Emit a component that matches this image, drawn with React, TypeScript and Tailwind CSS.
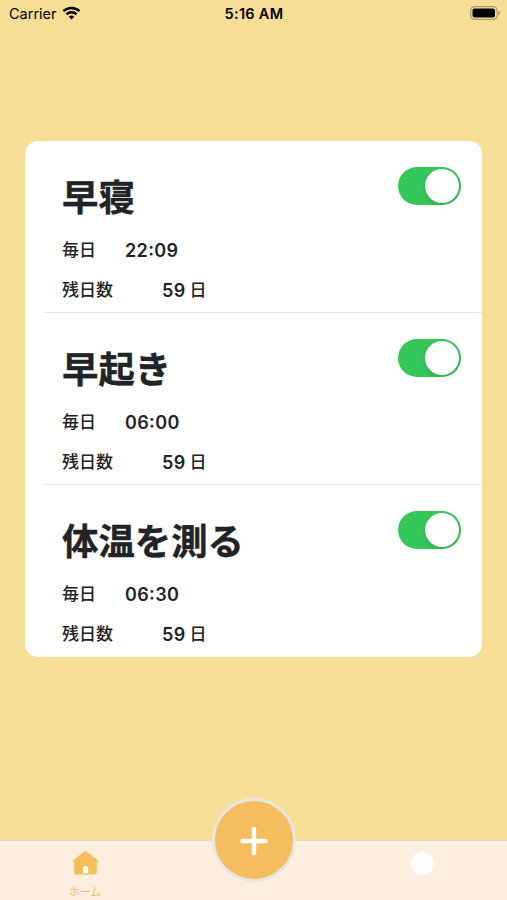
const alarms = [
  { title: '早寝', time: '22:09', daysLeft: 59 },
  { title: '早起き', time: '06:00', daysLeft: 59 },
  { title: '体温を測る', time: '06:30', daysLeft: 59 },
]

function StatusBar() {
  return (
    <header className="grid h-7 grid-cols-3 items-center pl-[9px] pr-[6px] text-black">
      <div className="flex items-center gap-[5px]">
        <span className="text-[14.5px] leading-7">Carrier</span>
        <svg className="-mt-[2px]" width="19" height="14" viewBox="0 0 18 14" fill="none" stroke="currentColor" strokeWidth="2.5">
          <path d="M1 5.2C5.4 .9 12.6 .9 17 5.2" />
          <path d="M4 8.3c2.8-2.7 7.2-2.7 10 0" />
          <path d="M6.3 10.7c1.5-1.5 3.9-1.5 5.4 0L9 13.6z" fill="currentColor" stroke="none" />
        </svg>
      </div>
      <span className="pr-[2px] text-center text-[14.5px] font-semibold leading-7 tracking-[0.02em]">5:16 AM</span>
      <svg className="-mt-[2px] justify-self-end" width="31" height="14" viewBox="0 0 31 14">
        <rect x=".6" y=".6" width="26.6" height="12.8" rx="4" fill="none" stroke="#ab9b70" strokeWidth="1.2" />
        <rect x="2.5" y="2.5" width="22.5" height="9" rx="2" />
        <path d="M28.5 4.7c2 .8 2 3.8 0 4.6z" fill="#ab9b70" />
      </svg>
    </header>
  )
}

function Toggle() {
  return (
    <button role="switch" aria-checked className="mt-[26px] flex h-[38px] w-[63px] justify-end rounded-full bg-[#34c759] p-[2px]">
      <span className="h-[34px] w-[34px] rounded-full bg-white shadow-[0_2px_5px_rgba(0,0,0,0.12)]" />
    </button>
  )
}

export default function App() {
  return (
    <div className="flex h-[900px] w-[507px] flex-col overflow-hidden bg-[#f7de97] font-[Inter,'Noto_Sans_CJK_JP',sans-serif] text-[#212326]">
      <StatusBar />
      <main className="flex-1 px-[25px] pt-[113px]">
        <ul className="h-[516px] overflow-hidden rounded-[13px] bg-white pl-[18px]">
          {alarms.map((alarm) => (
            <li
              key={alarm.title}
              className="flex h-[172px] justify-between border-b border-[#e8e8e8] pl-[19px] pr-[21px] last:border-b-0"
            >
              <div>
                <h2 className="mt-[30px] h-[54px] text-[36.4px] font-bold leading-[54px] [-webkit-text-stroke:0.4px_#212326]">
                  {alarm.title}
                </h2>
                <p className="mt-[10px] flex h-[30px] items-center font-semibold">
                  <span className="w-[63px] pt-[2px] text-[17px] font-medium">毎日</span>
                  <span className="text-[18px] tracking-[0.02em] [font-feature-settings:'case']">{alarm.time}</span>
                </p>
                <p className="mt-[10px] flex h-[30px] items-center font-semibold">
                  <span className="w-[100px] pt-[2px] text-[17px] font-medium">残日数</span>
                  <span className="text-[18px] tracking-[0.02em]">{alarm.daysLeft}</span>
                  <span className="ml-[4px] pt-[2px] text-[17px] font-medium">日</span>
                </p>
              </div>
              <Toggle />
            </li>
          ))}
        </ul>
      </main>
      <nav className="relative grid h-[60px] grid-cols-3 border-t border-[#e8d9c0] bg-[#feeee0]">
        <a className="flex flex-col items-center pl-px pt-[9px] text-[#f5bd5e]">
          <svg width="27" height="26" viewBox="0 0 27 26" fill="currentColor">
            <path d="M13.5 .8 26.2 10.8q.9 1.2-.7 1.2h-.7V23q0 1.5-1.5 1.5H3.7Q2.2 24.5 2.2 23V12H1.5q-1.6 0-.7-1.2z" />
            <path d="M11 23.2v-4.6a2.6 2.6 0 0 1 5.2 0v4.6z" fill="#fff" />
          </svg>
          <span className="mt-[8px] text-[11px] leading-4">ホーム</span>
        </a>
        <button className="absolute left-[212px] top-[-43px] flex h-[84px] w-[84px] items-center justify-center rounded-full border-[3px] border-[#e8e6e3] bg-[#f5bd5e]">
          <svg className="mt-px" width="30" height="30" viewBox="0 0 30 30" fill="none" stroke="#fff" strokeWidth="4.4" strokeLinecap="round">
            <path d="M15 3v24M3.5 15h23" />
          </svg>
        </button>
        <a className="col-start-3 flex justify-center pt-[11px]">
          <span className="h-[23px] w-[23px] rounded-full bg-white" />
        </a>
      </nav>
    </div>
  )
}
